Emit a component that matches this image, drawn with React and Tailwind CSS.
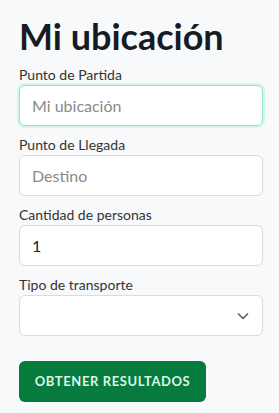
import React from 'react';

const Field = ({ label, children }) => (
  <div className="mt-[10px] flex flex-col">
    <label className="mb-[2px] text-[14px] leading-[17px] text-[#333]">{label}</label>
    {children}
  </div>
);

const inputCls =
  'h-[41px] w-full rounded-[6px] border border-[#d9dbe0] bg-white px-[12px] text-[16px] text-[#222] placeholder-[#8a8a8a] outline-none';

export default function App() {
  return (
    <div
      className="min-h-[413px] w-[279px] bg-[#f8f9fb] pl-[19px] pr-[16px] pt-[16px]"
      style={{ fontFamily: 'Lato, "Open Sans", sans-serif' }}
    >
      <h1 className="text-[36px] font-bold leading-[40px] text-[#161c24]">Mi ubicación</h1>
      <Field label="Punto de Partida">
        <input
          className="h-[41px] w-full rounded-[6px] border border-[#8fe7bf] bg-white px-[12px] text-[16px] text-[#222] placeholder-[#8a8a8a] outline-none shadow-[0_0_0_2px_#d4f7e6]"
          placeholder="Mi ubicación"
        />
      </Field>
      <Field label="Punto de Llegada">
        <input className={inputCls} placeholder="Destino" />
      </Field>
      <Field label="Cantidad de personas">
        <input className={inputCls} defaultValue="1" />
      </Field>
      <Field label="Tipo de transporte">
        <div className="relative">
          <select className={inputCls + ' appearance-none'}>
            <option></option>
          </select>
          <svg
            className="pointer-events-none absolute right-[14px] top-[17px]"
            width="12"
            height="8"
            viewBox="0 0 12 8"
            fill="none"
            stroke="#555"
            strokeWidth="1.5"
          >
            <path d="M1 1.5l5 5 5-5" />
          </svg>
        </div>
      </Field>
      <button className="mt-[25px] h-[41px] w-[187px] rounded-[6px] bg-[#077a3e] text-[13px] font-bold tracking-[0.6px] text-[#dcf5e6]">
        OBTENER RESULTADOS
      </button>
    </div>
  );
}
